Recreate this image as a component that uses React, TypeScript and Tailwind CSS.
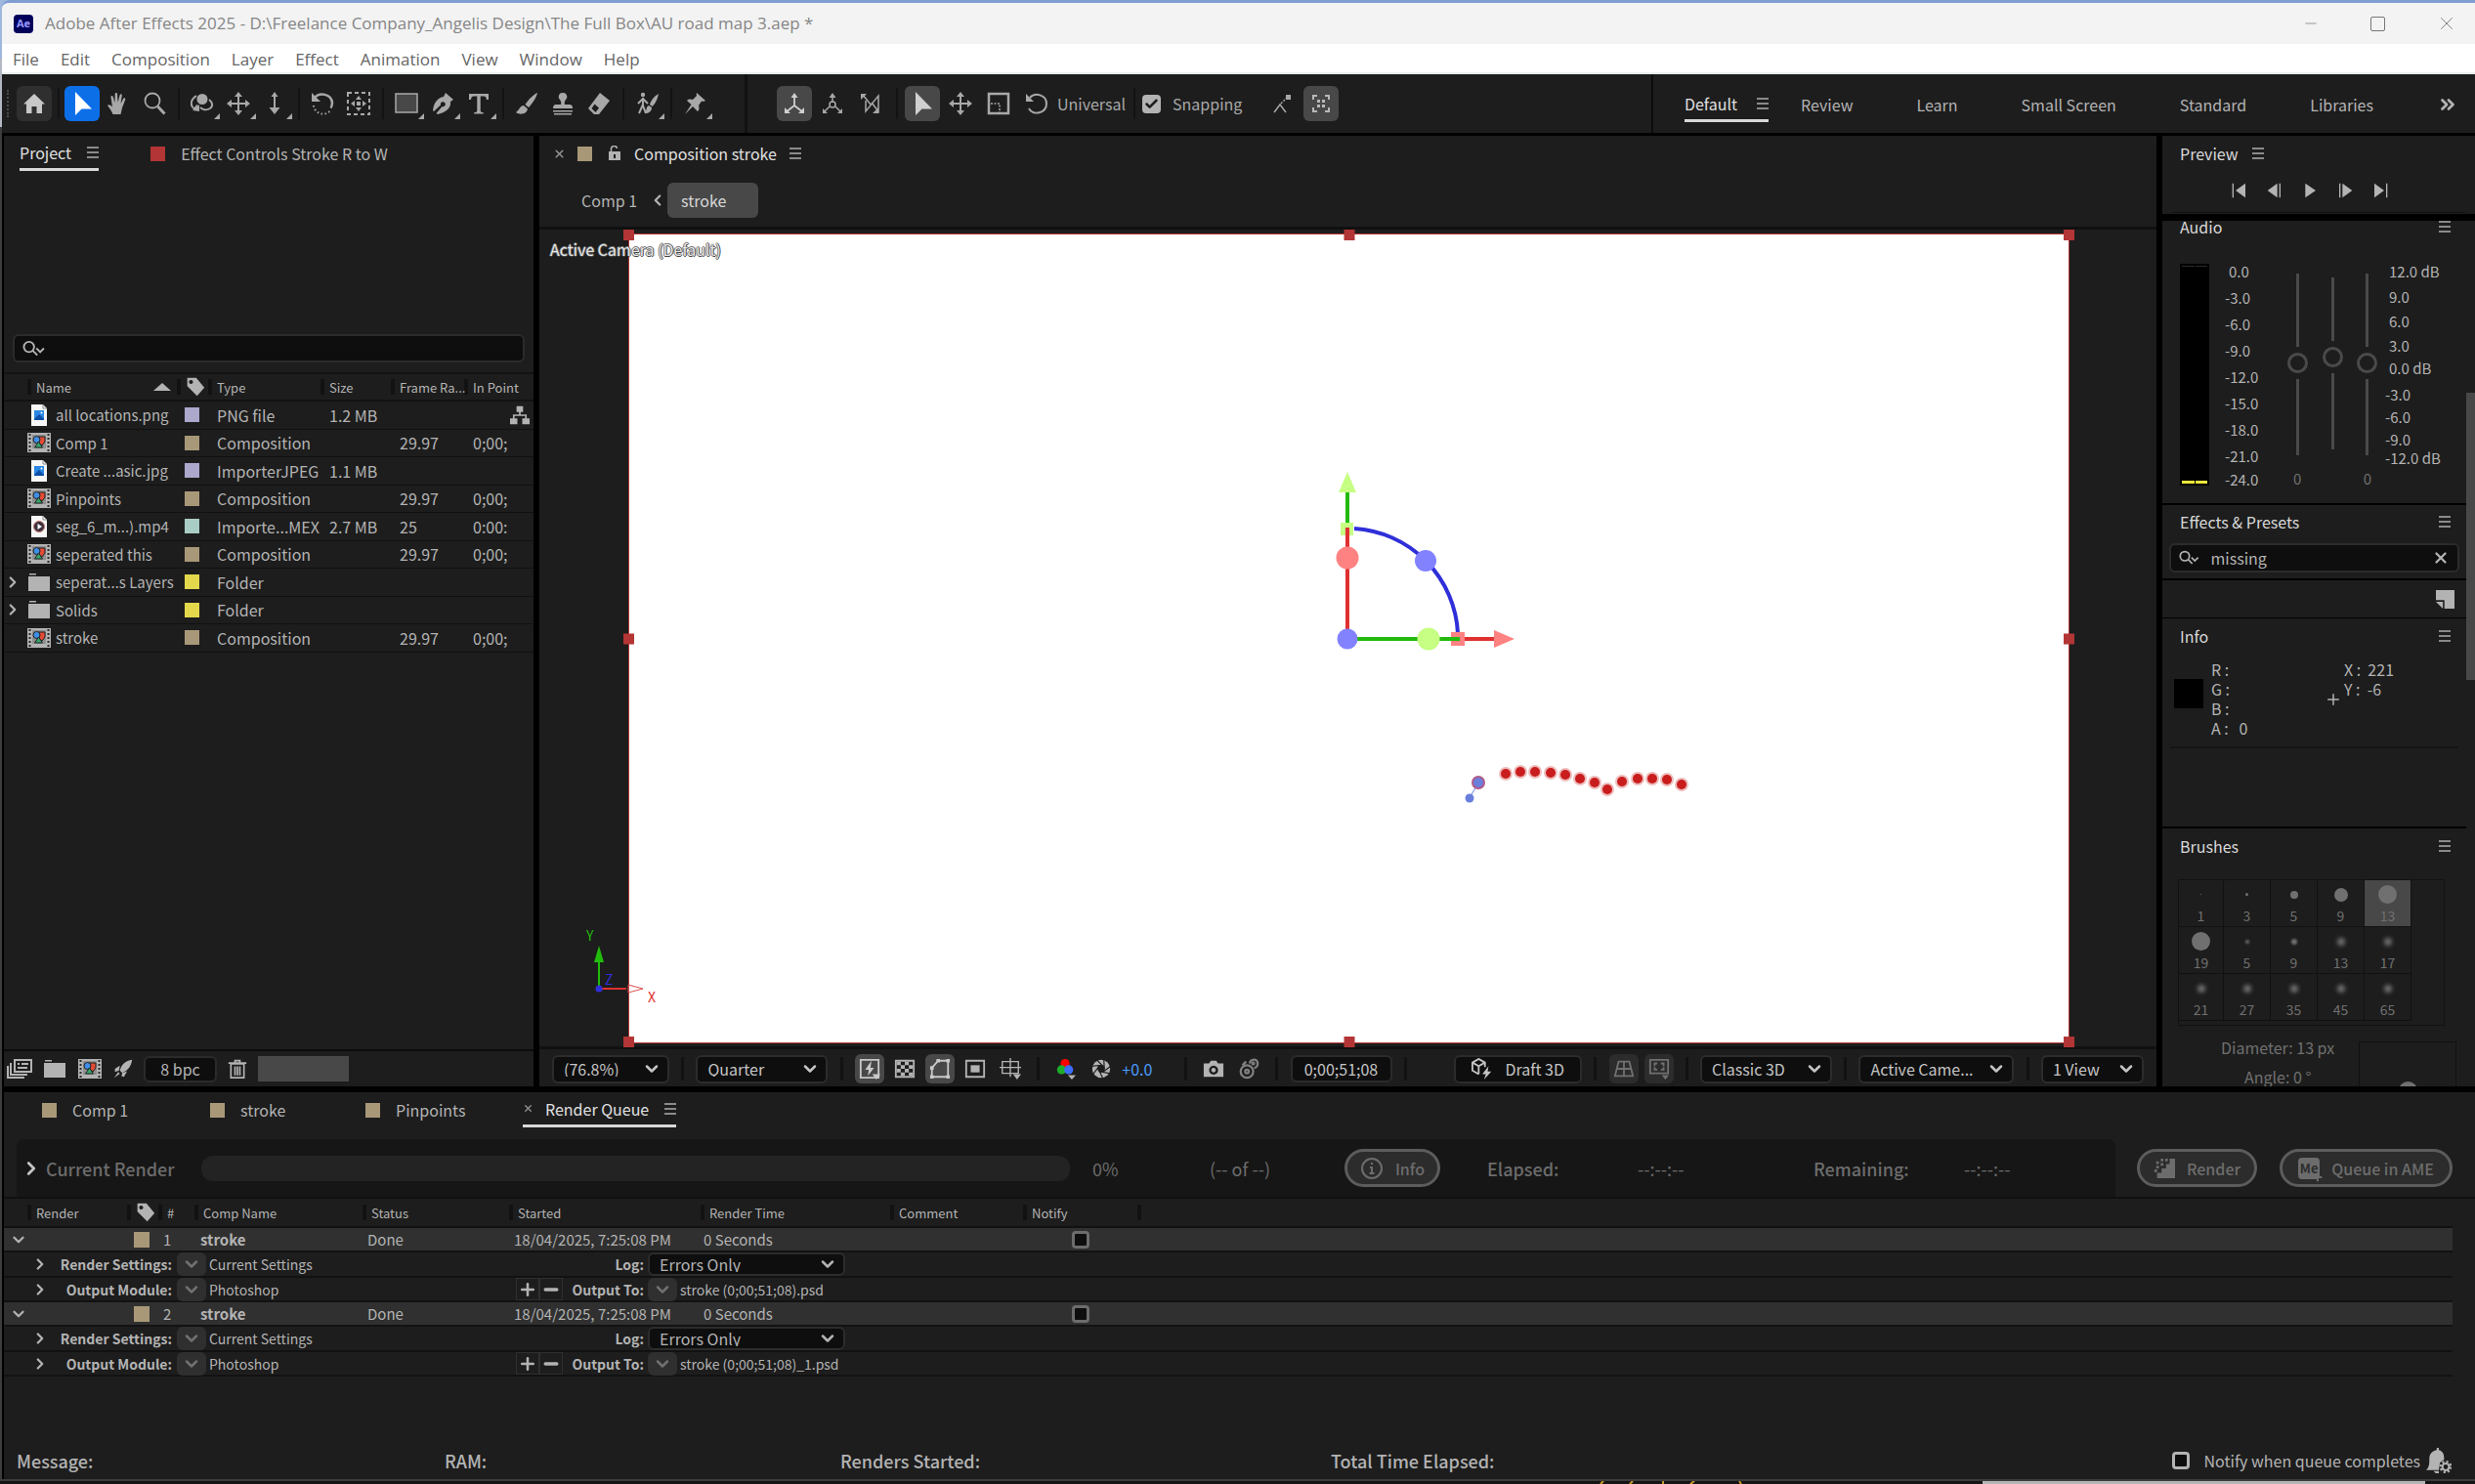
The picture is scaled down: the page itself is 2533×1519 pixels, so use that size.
import type { ReactNode } from "react";
import { Check, ChevronDown, ChevronLeft, ChevronRight, ChevronsRight, Minus, Plus, X } from "lucide-react";

type IconProps = { size?: number; children?: ReactNode };

const Svg = ({ size = 24, children }: IconProps) => (
  <svg width={size} height={size} viewBox="0 0 24 24" fill="currentColor" className="shrink-0" aria-hidden="true">
    {children}
  </svg>
);

const line = { fill: "none", stroke: "currentColor", strokeWidth: 2 };
const thin = { fill: "none", stroke: "currentColor", strokeWidth: 1.5 };

const Corner = () => <path d="M24 16v8h-8z" />;

const icons = {
  home: <path d="M12 2 23 12.5h-3V22h-5.500v-7h-5v7H4v-9.500H1z" />,
  select: <path d="M5 0v24l6.500-6.500H22z" />,
  hand: (
    <path d="M6.500 23c-1.500-3.500-3-6-5.500-9 1.500-1.500 3-.8 5 1.500L4.500 5.500c-.2-1.800 1.800-2 2.200-.4L8.500 11l.2-8.500c0-1.900 2.300-1.900 2.400 0l.5 8.300 2-7.500c.5-1.600 2.500-1.200 2.200.6l-1.300 8 2.700-5c.8-1.400 2.500-.6 2 1L16 16.500 14.500 23z" />
  ),
  zoom: (
    <>
      <circle cx="10" cy="9" r="7.500" {...thin} strokeWidth={1.8} />
      <path d="m15.500 15 7 7.500" {...line} strokeWidth={3} />
    </>
  ),
  orbit: (
    <>
      <circle cx="12" cy="7.500" r="5.500" />
      <path d="M6 4C0 8-1 14 4 17.500l3-4M19 8c4 3 4 7 1 9-4 2.500-8 1-10-1" {...line} />
      <path d="m9 13 0 7-7-1z" />
    </>
  ),
  move: (
    <>
      <path d="M12 3v18M3 12h18" {...line} />
      <path d="m12 0 4 5H8zM12 24l4-5H8zM0 12l5-4v8zM24 12l-5-4v8z" />
    </>
  ),
  dolly: (
    <>
      <path d="M12 4v14" {...line} />
      <path d="m12 0 3.500 5h-7zM12 23l5.500-7h-11z" />
    </>
  ),
  rotate: (
    <>
      <path d="M4 6c5-6 17-4 18 5 0 2-.5 4-1.500 5.500" {...line} strokeWidth={2.500} />
      <path d="M1 1v9h9z" />
      <path d="M3 14c1 9 13 12 18 4" {...line} strokeDasharray="1.500 2.500" />
    </>
  ),
  panBehind: (
    <>
      <rect x="1" y="1" width="22" height="22" {...line} strokeDasharray="4 3" />
      <path d="m12 4 3 4H9zM12 20l3-4H9zM4 12l4-3v6zM20 12l-4-3v6zM10 10h4v4h-4z" />
    </>
  ),
  rect: <rect x="1" y="2" width="22" height="19" fill="#484848" stroke="currentColor" strokeWidth="1.500" />,
  pen: (
    <path
      d="m15 1 8 7-3 2c1 6-4 11-13 13l-1.500-1 6-7a2.500 2.500 0 1 0-1.500-1.500l-7 6.500L2 19C3 11 7 6 13 5z"
      fillRule="evenodd"
    />
  ),
  type: <path d="M2 2h20v6h-2c-.3-2.500-1-3.500-3-3.500h-3.300V19c0 1.500.8 2 3 2v1.500H7.300V21c2.200 0 3-.5 3-2V4.500H7c-2 0-2.700 1-3 3.500H2z" />,
  brush: <path d="M23 1c-4 1.500-10 8-12.500 12l3.500 3C17 13 22 6 23 1zM9 14c-4 0-4 4-8 7 4 3 11 2 12-3.500z" />,
  stamp: <path d="M12 1a4 4 0 0 0-3 7c1.500 2 1.500 3.500 1 5H5c-2 0-3 1.500-3 4h20c0-2.500-1-4-3-4h-5c-.5-1.500-.5-3 1-5a4 4 0 0 0-3-7zM2 19h20v1.500H2zM3 22h18v1.500H3z" />,
  eraser: <path d="m13 1 10 8-11 14-5 0L1 17zm-8.500 16 4 4 3.500-4.500-4.500-4z" fillRule="evenodd" />,
  roto: (
    <>
      <circle cx="8" cy="3" r="2.200" />
      <path d="M8 6v8l3 8M8 13l-4 9M8 7l-5 5M8 7l5 5" {...line} />
      <path d="M24 2c-4 2-8 7-9 11l2.500 2C21 12 23 7 24 2zM14 14c-3 1-2 5-4 8 4 0 7-2 7-6z" />
    </>
  ),
  pin: <path d="m14 1 9 8c-2 1-3 1-4 .5L16 14c1 3 .5 5-1 6l-5-5-8 8 6.500-10L4 9c1-1.500 3.500-2 6-1l4-4c-.5-1-.5-2 0-3z" />,
  axes: (
    <>
      <path d="M12 4v10M12 14l-9 7M12 14l9 7" {...thin} strokeWidth={1.800} />
      <path d="m12 1 3.500 5h-7zM2 16v6h6zM22 16v6h-6z" />
    </>
  ),
  axesWorld: (
    <>
      <path d="M12 4v7M9 15l-6 6M15 15l6 6" {...thin} />
      <circle cx="12" cy="13" r="3" {...thin} />
      <path d="m12 1 3.500 5h-7zM2 17v5h5zM22 17v5h-5z" />
    </>
  ),
  axesView: (
    <>
      <path d="m4 3 8 10M7 9v11L20 4v16l-7-9" {...thin} />
      <path d="M2 2h6L2 8zM20 22v-6l-6 6z" />
    </>
  ),
  scale: (
    <>
      <path d="M2 2h20v20H2z" {...line} strokeWidth={2.500} />
      <path d="M4 12h9v9" {...thin} strokeDasharray="2 1.500" />
    </>
  ),
  undo: (
    <>
      <path d="M5 6c5-6 17-3 17 6 0 10-14 13-18 5" {...line} />
      <path d="M1 2v8h8z" />
    </>
  ),
  snapEdge: (
    <>
      <path d="m4 21 6-8 6 8" {...thin} />
      <path d="m11 12 6-6" {...thin} strokeDasharray="2 1.500" />
      <path d="M16 3h5v5h-5z" />
    </>
  ),
  snapBox: (
    <>
      <path d="M4 8V4h4M16 4h4v4M20 16v4h-4M8 20H4v-4" {...line} />
      <path d="M8 8h3v3H8zM13 8h3v3h-3zM8 13h3v3H8zM13 13h3v3h-3z" />
    </>
  ),
};

const Tag = () => (
  <Svg size={20}>
    <path d="M2 1h11l10 12-9 10L2 11zm4.500 2.500a2.500 2.500 0 1 0 .1 0z" fillRule="evenodd" />
  </Svg>
);

const PanelMenu = ({ label }: { label: string }) => (
  <button type="button" aria-label={label} className="text-[#8a8a8a]">
    <svg width="12" height="12" viewBox="0 0 12 12" fill="currentColor" aria-hidden="true">
      <path d="M0 0h12v2H0zM0 5h12v2H0zM0 10h12v2H0z" />
    </svg>
  </button>
);

const SearchIcon = () => (
  <svg width="24" height="18" viewBox="0 0 24 18" fill="none" stroke="#b3b3b3" strokeWidth="2" aria-hidden="true">
    <circle cx="7" cy="7" r="5.500" />
    <path d="m11 11 5 5M15 8.500l4 4 4-4" />
  </svg>
);

const CompIcon = () => (
  <svg width="24" height="20" viewBox="0 0 24 20" aria-hidden="true" className="shrink-0">
    <path d="M0 0h24v20H0z" fill="#b3b3b3" />
    <path d="M2.500 1v18M21.500 1v18" stroke="#2a2a2a" strokeWidth="2" strokeDasharray="2 2" />
    <path d="M5 2h14v14H5z" fill="#8f8f8f" />
    <path d="M11 4h7v5l-3 4-4-3z" fill="#e34b35" stroke="#222" />
    <circle cx="9.500" cy="7" r="3.500" fill="#3f8fe8" stroke="#222" />
    <path d="m11.500 9 4 6h-8z" fill="#35a56b" stroke="#222" />
  </svg>
);

const FileIcon = ({ video }: { video?: boolean }) => (
  <svg width="24" height="22" viewBox="0 0 24 22" aria-hidden="true" className="shrink-0">
    <path d="M4 0h12l4 4v18H4z" fill="#f7f7f7" />
    <path d="M16 0v4h4" fill="none" stroke="#8a8a8a" />
    {video ? (
      <>
        <circle cx="12" cy="11" r="5.500" fill="#3b2f3d" stroke="#c9796a" />
        <path d="m10.500 8 4.500 3-4.500 3z" fill="#fff" />
      </>
    ) : (
      <>
        <path d="M7 6h10v10H7z" fill="#2b87e3" />
        <path d="m7 15 5-5 5 5v1H7z" fill="#0b4ea8" />
        <circle cx="14.500" cy="8.500" r="1" fill="#fff" />
      </>
    )}
  </svg>
);

const FolderIcon = () => (
  <svg width="24" height="18" viewBox="0 0 24 18" fill="#b3b3b3" aria-hidden="true" className="shrink-0">
    <path d="M2 0h7v1.500H2zM1 3h22v15H1z" />
  </svg>
);

const Divider = () => <span className="h-6 w-[3px] shrink-0 bg-[#121212]" />;

const ToolButton = ({
  name,
  label,
  tone = "",
  flyout,
}: {
  name: keyof typeof icons;
  label: string;
  tone?: string;
  flyout?: boolean;
}) => (
  <button
    type="button"
    aria-label={label}
    className={`relative flex size-9 shrink-0 items-center justify-center rounded-md ${tone}`}
  >
    <Svg>{icons[name]}</Svg>
    {flyout && (
      <span className="absolute right-0 bottom-0.5">
        <Svg size={18}>
          <Corner />
        </Svg>
      </span>
    )}
  </button>
);

const ToolSeparator = () => (
  <span className="flex w-[11px] shrink-0 justify-center">
    <span className="h-8 w-0.5 bg-[#131313]" />
  </span>
);

const Dropdown = ({ label, value, className }: { label: string; value: string; className: string }) => (
  <span className={`relative shrink-0 ${className}`}>
    <select
      aria-label={label}
      className="h-full w-full appearance-none rounded-md border-2 border-[#2c2c2c] bg-[#0e0e0e] pl-2.5 text-base leading-none text-[#c4c4c4]"
    >
      <option>{value}</option>
    </select>
    <ChevronDown
      size={20}
      strokeWidth={3}
      className="pointer-events-none absolute top-1/2 right-2 -translate-y-1/2 text-[#c4c4c4]"
    />
  </span>
);

const TitleBar = () => (
  <>
    <header className="flex h-[45px] items-center rounded-tl-lg border-t-3 border-[#7f9fd3] bg-[#f3f3f3] pl-3 font-['Open_Sans',sans-serif]">
      <span className="flex h-[19px] w-5 items-center justify-center rounded-sm bg-[#00005b] text-[11px] font-bold text-[#9999ff]">
        Ae
      </span>
      <h1 className="ml-3 flex-1 text-[17px] text-[#868686]">
        Adobe After Effects 2025 - D:\Freelance Company_Angelis Design\The Full Box\AU road map 3.aep *
      </h1>
      <div className="flex items-center gap-[52px] pr-[18px] text-[#777]">
        <button type="button" aria-label="Minimize">
          <Minus size={18} strokeWidth={1} />
        </button>
        <button type="button" aria-label="Maximize">
          <span className="block size-[15px] rounded-xs border border-[#777]" />
        </button>
        <button type="button" aria-label="Close">
          <X size={22} strokeWidth={1} />
        </button>
      </div>
    </header>
    <nav className="flex h-[31px] items-center gap-[22px] border-b-2 border-[#e9eeec] bg-white pt-0.5 pl-[11px] font-['Open_Sans',sans-serif] text-[17px] text-[#666]">
      {["File", "Edit", "Composition", "Layer", "Effect", "Animation", "View", "Window", "Help"].map((item) => (
        <button key={item} type="button">
          {item}
        </button>
      ))}
    </nav>
  </>
);

const Toolbar = () => (
  <div className="flex h-[60px] items-center pl-[5px] text-[#a8a8a8]">
    <span className="mr-2 h-7 border-l-2 border-dotted border-[#4a4a4a]" />
    <div className="flex w-[745px] items-center gap-px">
      <ToolButton name="home" label="Home" tone="bg-[#2f2f2f] text-[#c8c8c8]" />
      <ToolSeparator />
      <ToolButton name="select" label="Selection Tool" tone="bg-[#0d6fe8] text-white" />
      <ToolButton name="hand" label="Hand Tool" />
      <ToolButton name="zoom" label="Zoom Tool" />
      <ToolSeparator />
      <ToolButton name="orbit" label="Orbit Tool" flyout />
      <ToolButton name="move" label="Pan Camera Tool" flyout />
      <ToolButton name="dolly" label="Dolly Tool" flyout />
      <ToolSeparator />
      <ToolButton name="rotate" label="Rotation Tool" />
      <ToolButton name="panBehind" label="Pan Behind Tool" />
      <ToolSeparator />
      <ToolButton name="rect" label="Rectangle Tool" flyout />
      <ToolButton name="pen" label="Pen Tool" flyout />
      <ToolButton name="type" label="Type Tool" flyout />
      <ToolSeparator />
      <ToolButton name="brush" label="Brush Tool" />
      <ToolButton name="stamp" label="Clone Stamp Tool" />
      <ToolButton name="eraser" label="Eraser Tool" />
      <ToolSeparator />
      <ToolButton name="roto" label="Roto Brush Tool" flyout />
      <ToolSeparator />
      <ToolButton name="pin" label="Puppet Pin Tool" flyout />
    </div>
    <span className="h-full w-[3px] bg-[#111]" />
    <div className="flex flex-1 items-center gap-[3px] pl-[30px]">
      <ToolButton name="axes" label="Local Axis Mode" tone="bg-[#484848] text-[#d0d0d0]" />
      <ToolButton name="axesWorld" label="World Axis Mode" />
      <ToolButton name="axesView" label="View Axis Mode" />
      <ToolSeparator />
      <ToolButton name="select" label="Universal" tone="bg-[#484848] text-[#d0d0d0]" />
      <ToolButton name="move" label="Position" />
      <ToolButton name="scale" label="Scale" />
      <ToolButton name="undo" label="Rotation" />
      <span className="text-base">Universal</span>
      <ToolSeparator />
      <label className="flex items-center gap-3 text-base">
        <span className="relative flex size-[19px]">
          <input type="checkbox" defaultChecked className="size-full appearance-none rounded-sm bg-[#b3b3b3]" />
          <Check size={15} strokeWidth={4} className="pointer-events-none absolute top-0.5 left-0.5 text-[#1d1d1d]" />
        </span>
        Snapping
      </label>
      <span className="ml-5 flex gap-1">
        <ToolButton name="snapEdge" label="Snap Edges" />
        <ToolButton name="snapBox" label="Snap Features" tone="bg-[#484848] text-[#b8b8b8]" />
      </span>
    </div>
    <nav className="flex h-full w-[843px] items-center gap-[65px] border-l-2 border-[#0c0c0c] pt-0.5 pl-8 text-base whitespace-nowrap text-[#b3b3b3]">
      <span className="flex h-9 items-center gap-5 border-b-3 border-[#d8d8d8] text-[#e0e0e0]">
        <button type="button">Default</button>
        <PanelMenu label="Workspace menu" />
      </span>
      {["Review", "Learn", "Small Screen", "Standard", "Libraries"].map((item) => (
        <button key={item} type="button" className="first-of-type:-ml-8">
          {item}
        </button>
      ))}
      <button type="button" aria-label="More workspaces">
        <ChevronsRight size={22} strokeWidth={3} />
      </button>
    </nav>
  </div>
);

interface ProjectItem {
  name: string;
  kind: "image" | "video" | "comp" | "folder";
  type: string;
  size?: string;
  rate?: string;
  inPoint?: string;
}

const projectItems: ProjectItem[] = [
  { name: "all locations.png", kind: "image", type: "PNG file", size: "1.2 MB" },
  { name: "Comp 1", kind: "comp", type: "Composition", rate: "29.97", inPoint: "0;00;" },
  { name: "Create ...asic.jpg", kind: "image", type: "ImporterJPEG", size: "1.1 MB" },
  { name: "Pinpoints", kind: "comp", type: "Composition", rate: "29.97", inPoint: "0;00;" },
  { name: "seg_6_m...).mp4", kind: "video", type: "Importe...MEX", size: "2.7 MB", rate: "25", inPoint: "0:00:" },
  { name: "seperated this", kind: "comp", type: "Composition", rate: "29.97", inPoint: "0;00;" },
  { name: "seperat...s Layers", kind: "folder", type: "Folder" },
  { name: "Solids", kind: "folder", type: "Folder" },
  { name: "stroke", kind: "comp", type: "Composition", rate: "29.97", inPoint: "0;00;" },
];

const swatches = {
  image: "bg-[#aba8cc]",
  video: "bg-[#a9ccc5]",
  comp: "bg-[#a89878]",
  folder: "bg-[#e3d84c]",
};

const HeadCell = ({ children }: { children?: ReactNode }) => (
  <th className="p-0 text-left text-[13px] font-normal">
    <span className="flex h-4 items-center border-l-4 border-[#121212] pl-[5px] leading-none whitespace-nowrap">{children}</span>
  </th>
);

const ProjectPanel = () => (
  <section className="flex w-[542px] shrink-0 flex-col bg-[#1d1d1d]">
    <div className="flex h-9 items-stretch pl-4 text-base leading-none">
      <span className="flex items-center gap-4 border-b-3 border-[#d8d8d8] text-[#e0e0e0]">
        <button type="button">Project</button>
        <PanelMenu label="Project panel menu" />
      </span>
      <button type="button" className="ml-[53px] flex items-center gap-4">
        <span className="size-[15px] bg-[#b43535]" />
        Effect Controls Stroke R to W
      </button>
    </div>
    <label className="mx-[9px] mt-[167px] flex h-[29px] items-center rounded-md border-2 border-[#2b2b2b] bg-[#0e0e0e] px-2">
      <SearchIcon />
      <input type="text" aria-label="Search project" className="w-full bg-transparent pl-2 text-base outline-none" />
    </label>
    <table className="mt-[10px] w-full table-fixed border-t-2 border-[#121212] leading-none">
      <colgroup>
        <col className="w-[24px]" />
        <col className="w-[153px]" />
        <col className="w-[32px]" />
        <col className="w-[115px]" />
        <col className="w-[72px]" />
        <col className="w-[75px]" />
        <col />
      </colgroup>
      <thead>
        <tr className="h-[28px] border-b-2 border-[#121212]">
          <th />
          <HeadCell>
            <span className="flex-1">Name</span>
            <svg width="18" height="8" viewBox="0 0 18 8" fill="currentColor" className="mr-1.5" aria-hidden="true">
              <path d="m9 0 9 8H0z" />
            </svg>
          </HeadCell>
          <HeadCell>
            <Tag />
          </HeadCell>
          <HeadCell>Type</HeadCell>
          <HeadCell>Size</HeadCell>
          <HeadCell>Frame Ra...</HeadCell>
          <HeadCell>In Point</HeadCell>
        </tr>
      </thead>
      <tbody className="text-base leading-none whitespace-nowrap">
        {projectItems.map((item, i) => (
          <tr key={item.name} className="border-b border-[#111] odd:h-[29px] even:h-[28px]">
            <td className="p-0">
              {item.kind === "folder" && <ChevronRight size={18} strokeWidth={3} />}
            </td>
            <td className="p-0 text-[15px]">
              <span className="flex items-center gap-[5px]">
                {item.kind === "comp" && <CompIcon />}
                {item.kind === "folder" && <FolderIcon />}
                {item.kind === "image" && <FileIcon />}
                {item.kind === "video" && <FileIcon video />}
                {item.name}
              </span>
            </td>
            <td className="p-0 pl-2">
              <span className={`block size-[15px] ${swatches[item.kind]}`} />
            </td>
            <td className="p-0 pl-[9px]">{item.type}</td>
            <td className="p-0 pl-[9px]">{item.size}</td>
            <td className="p-0 pl-[9px]">{item.rate}</td>
            <td className="p-0 pl-[9px]">
              {i === 0 ? (
                <span className="flex justify-end pr-1">
                  <Svg size={20}>
                    <path d="M8 1h8v7H8zM0 16h9v7H0zM15 16h9v7h-9zM11 8h2v3h7.500v5h-2v-3h-13v3h-2v-5H11z" />
                  </Svg>
                </span>
              ) : (
                item.inPoint
              )}
            </td>
          </tr>
        ))}
      </tbody>
    </table>
    <div className="mt-auto flex h-[38px] items-center border-t-2 border-[#0c0c0c] pl-[3px]">
      <button type="button" aria-label="Interpret Footage" className="mr-[11px]">
        <svg width="26" height="20" viewBox="0 0 26 20" fill="none" stroke="#b3b3b3" strokeWidth="2" aria-hidden="true">
          <path d="M8 1h17v12H8zM4 4v12h17M1 7v12h17M11 5h2M15 5h7M11 9h10" />
        </svg>
      </button>
      <button type="button" aria-label="New Folder" className="mr-3">
        <FolderIcon />
      </button>
      <button type="button" aria-label="New Composition" className="mr-3">
        <CompIcon />
      </button>
      <button type="button" aria-label="Project Settings" className="mr-[11px]">
        <Svg size={20}>
          <path d="M23 1C15 2 10 7 8 14l3 3C18 14 22 9 23 1zM8 8 2 12v4l5-2zM17 15l-4 7-3-1 1-4zM6 16l-5 7 7-5z" />
        </Svg>
      </button>
      <button type="button" className="h-[27px] w-[75px] rounded-md border-2 border-[#2b2b2b] bg-[#0e0e0e] text-base leading-none">
        8 bpc
      </button>
      <button type="button" aria-label="Delete" className="mx-[11px]">
        <Svg size={20}>
          <path d="M4 6h16v17H4zM1 5h22M9 5V2h6v3M9 9v11M12 9v11M15 9v11" {...line} />
        </Svg>
      </button>
      <span className="h-[26px] w-[93px] bg-[#484848]" />
    </div>
  </section>
);

const strokeDots = [
  [161, 182], [176, 180], [191, 180], [207, 181], [222, 183], [237, 187], [252, 191],
  [265, 198], [280, 190], [296, 187], [311, 187], [326, 188], [341, 193],
];

const Gizmo = () => (
  <svg width="400" height="360" viewBox="1360 470 400 360" aria-hidden="true" className="absolute top-[230px] left-[715px]">
    <path d="M1387 541a113 113 0 0 1 106 107" fill="none" stroke="#2f2fd9" strokeWidth="4" />
    <path d="M1380 504v32" stroke="#22bb0c" strokeWidth="4" />
    <path d="m1380 483 9 21h-18zM1373 535h13v13h-13z" fill="#c6ff83" />
    <path d="M1380 540v105M1500 654h32" stroke="#e03030" strokeWidth="4" />
    <path d="m1551 654-21-9v18zM1486 647h14v14h-14z" fill="#ff8282" />
    <path d="M1390 654h105" stroke="#22bb0c" strokeWidth="4" />
    <circle cx="1380" cy="571" r="11.500" fill="#ff8282" />
    <circle cx="1460" cy="574" r="11" fill="#8282ff" />
    <circle cx="1463" cy="654" r="11.500" fill="#c6ff83" />
    <circle cx="1380" cy="654" r="10.500" fill="#8282ff" />
    <path d="m1514 801-9 16" stroke="#6a7fdc" />
    <circle cx="1514" cy="801" r="6" fill="#6a7fdc" stroke="#b05a8a" strokeWidth="2" />
    <circle cx="1505" cy="817" r="4.500" fill="#6a7fdc" />
  </svg>
);

const StrokePath = () => (
  <svg width="220" height="40" viewBox="150 170 220 40" aria-hidden="true" className="absolute top-[540px] left-[886px]">
    {strokeDots.map(([x, y]) => (
      <g key={x}>
        <circle cx={x} cy={y} r="7" fill="#eebcbc" />
        <circle cx={x} cy={y} r="5" fill="#c91d1d" />
      </g>
    ))}
  </svg>
);

const handleSpots = [
  "-top-[5px] -left-[6px]",
  "-top-[5px] left-1/2 -translate-x-1/2",
  "-top-[5px] -right-[6px]",
  "top-1/2 -left-[6px] -translate-y-1/2",
  "top-1/2 -right-[6px] -translate-y-1/2",
  "-bottom-[5px] -left-[6px]",
  "-bottom-[5px] left-1/2 -translate-x-1/2",
  "-bottom-[5px] -right-[6px]",
];

const Viewport = () => (
  <div className="relative flex flex-1 border-y-3 border-[#101010] pt-1 pr-[89px] pb-[3px] pl-[91px]">
    <div className="relative flex-1 border border-[#b43535] bg-white">
      {handleSpots.map((spot) => (
        <span key={spot} className={`absolute size-[11px] bg-[#b43535] ${spot}`} />
      ))}
      <Gizmo />
      <StrokePath />
    </div>
    <span className="absolute top-2 left-[11px] text-base text-[#e8e8e8] [text-shadow:1px_0_#444,-1px_0_#777,0_1px_#444,0_-1px_#777]">
      Active Camera (Default)
    </span>
    <svg width="90" height="90" viewBox="0 0 90 90" aria-hidden="true" className="absolute bottom-9 left-10 text-[14px]">
      <path d="M21 67V38" stroke="#22bb0c" strokeWidth="2" />
      <path d="m21 23 5 17H16z" fill="#22bb0c" />
      <path d="M21 67h28" stroke="#e03030" strokeWidth="2" />
      <path d="m66 67-15-4v8z" fill="none" stroke="#e05050" />
      <circle cx="21" cy="67" r="3.500" fill="#2f2fd9" />
      <text x="8" y="18" fill="#22bb0c">Y</text>
      <text x="27" y="63" fill="#2f2fd9">Z</text>
      <text x="71" y="81" fill="#e03030">X</text>
    </svg>
  </div>
);

const ViewIcon = ({ label, active, dim, children }: { label: string; active?: boolean; dim?: boolean; children: ReactNode }) => (
  <button
    type="button"
    aria-label={label}
    className={`flex h-[30px] w-[30px] shrink-0 items-center justify-center rounded-md ${
      active ? "bg-[#484848] text-[#c8c8c8]" : dim ? "bg-[#2c2c2c] text-[#707070]" : ""
    }`}
  >
    <Svg size={22}>{children}</Svg>
  </button>
);

const ViewerBar = () => (
  <div className="flex h-[38px] items-center justify-between px-[13px] pt-0.5 text-[#b3b3b3]">
    <Dropdown label="Magnification" value="(76.8%)" className="h-[29px] w-[120px]" />
    <Divider />
    <Dropdown label="Resolution" value="Quarter" className="h-[29px] w-[135px]" />
    <Divider />
    <span className="flex gap-1.5">
      <ViewIcon label="Fast Previews" active>
        <path d="M2 2h20v20H2z" {...line} />
        <path d="m14 3-7 10h4l-1 7 7-9h-4zM15 18h9l-4.500 6z" />
      </ViewIcon>
      <ViewIcon label="Transparency Grid">
        <path d="M2 3h20v18H2z" {...line} />
        <path d="M3 4h4.500v4H3zM12 4h4.500v4H12zM7.500 8H12v4H7.500zM16.500 8H21v4h-4.500zM3 12h4.500v4H3zM12 12h4.500v4H12zM7.500 16H12v4H7.500zM16.500 16H21v4h-4.500z" />
      </ViewIcon>
      <ViewIcon label="Mask Visibility" active>
        <path d="M3 21V11l7-8h11v18z" {...line} />
        <path d="M1 19h4v4H1zM19 19h4v4h-4zM19 1h4v4h-4zM8 1h4v4H8zM1 9h4v4H1z" />
      </ViewIcon>
      <ViewIcon label="Region of Interest">
        <path d="M2 3h20v18H2z" {...line} />
        <path d="M7 8h10v8H7z" />
      </ViewIcon>
      <ViewIcon label="Grid and Guides">
        <path d="M3 4h18v13H3zM12 0v21M0 10.500h24" {...thin} />
        <path d="M15 18h9l-4.500 6z" />
      </ViewIcon>
    </span>
    <Divider />
    <span className="flex items-center gap-1.5">
      <ViewIcon label="Channels">
        <circle cx="11" cy="6" r="5" fill="#f00" />
        <circle cx="7" cy="13" r="5" fill="#1fae2b" />
        <circle cx="15" cy="13" r="5" fill="#3d6dff" />
        <path d="M14 19h9l-4.500 5z" />
      </ViewIcon>
      <ViewIcon label="Exposure">
        <circle cx="12" cy="12" r="10" />
        <path
          d="M14 9 7 2M15.500 12.500 15 2M14 15.500l8-6M9.500 15 21 17M8.500 11.500 14 23M10 8.500 3 18M12 8 2 9"
          fill="none"
          stroke="#1d1d1d"
          strokeWidth="1.300"
        />
        <circle cx="12" cy="12" r="4" fill="#1d1d1d" />
      </ViewIcon>
      <span className="text-base text-[#4a9cff]">+0.0</span>
    </span>
    <span className="w-2" />
    <Divider />
    <span className="flex gap-1.5">
      <ViewIcon label="Take Snapshot">
        <path d="M1 6h6l2-3h6l2 3h6v15H1zm11 2.500a5 5 0 1 0 .1 0zm0 2.500a2.500 2.500 0 1 1-.1 0z" fillRule="evenodd" />
      </ViewIcon>
      <ViewIcon label="Show Snapshot">
        <g stroke="#808080" strokeWidth="2.500" fill="none">
          <circle cx="10" cy="15" r="7" />
          <circle cx="10" cy="15" r="2" />
          <path d="M13 6c1-5 9-6 9 0 0 3-2 5-4 5M5 8l4-4" />
          <circle cx="17" cy="6" r="1" />
        </g>
      </ViewIcon>
    </span>
    <Divider />
    <button type="button" className="h-7 w-[104px] rounded-md border-2 border-[#2b2b2b] bg-[#0e0e0e] text-base leading-none text-[#c4c4c4]">
      0;00;51;08
    </button>
    <Divider />
    <span className="w-6" />
    <button
      type="button"
      className="flex h-[29px] w-[131px] items-center justify-center gap-3 rounded-md border-2 border-[#2b2b2b] bg-[#0e0e0e] text-base leading-none text-[#c4c4c4]"
    >
      <Svg size={22}>
        <path d="M15 10V5L8 1 1 5v9l7 4M1 5l7 4 7-4M8 9v9" {...line} />
        <path d="m19 9-7 9h4l-2 6 8-9h-4z" />
      </Svg>
      Draft 3D
    </button>
    <Divider />
    <span className="flex gap-1.5">
      <ViewIcon label="3D Ground Plane" dim>
        <path d="M6 4h12l4 16H2zM12 4v16M4 12h16" {...line} />
      </ViewIcon>
      <ViewIcon label="Extended Viewer" dim>
        <path d="M2 2h20v15H2z" {...line} />
        <path d="M7 9V6h3M14 6h3v3M17 10v3h-3M10 13H7v-3" {...line} />
        <path d="M15 19h8l-4 5z" />
      </ViewIcon>
    </span>
    <Divider />
    <Dropdown label="3D Renderer" value="Classic 3D" className="h-[29px] w-[135px]" />
    <Divider />
    <Dropdown label="3D View" value="Active Came..." className="h-[29px] w-[159px]" />
    <Divider />
    <Dropdown label="View Layout" value="1 View" className="h-[29px] w-[105px]" />
  </div>
);

const CompPanel = () => (
  <section className="flex min-w-0 flex-1 flex-col bg-[#1d1d1d]">
    <div className="flex h-9 items-center pl-3.5 text-base leading-none text-[#e0e0e0]">
      <button type="button" aria-label="Close composition" className="mr-3 text-[#909090]">
        <X size={13} strokeWidth={3} />
      </button>
      <span className="mr-4 size-[15px] bg-[#a89878]" />
      <svg width="14" height="16" viewBox="0 0 14 16" aria-hidden="true" className="mr-[13px] text-[#b3b3b3]">
        <path d="M3.500 7V4a3 3 0 0 1 6-1" fill="none" stroke="currentColor" strokeWidth="1.500" />
        <path d="M1 6h12v9H1zM6 9v4h2V9z" fill="currentColor" fillRule="evenodd" />
      </svg>
      <h2 className="mr-[13px]">Composition stroke</h2>
      <PanelMenu label="Composition panel menu" />
    </div>
    <nav className="flex h-[57px] items-center pt-0.5 pl-[43px] text-base leading-none">
      <button type="button">Comp 1</button>
      <ChevronLeft size={18} strokeWidth={3} className="mr-px ml-3" />
      <button type="button" className="h-9 w-[93px] rounded-md bg-[#484848] pl-3.5 text-left text-[#d8d8d8]">
        stroke
      </button>
    </nav>
    <Viewport />
    <ViewerBar />
  </section>
);

const PanelHead = ({ title }: { title: string }) => (
  <div className="flex items-center justify-between pr-4 pl-[18px] text-base leading-3 text-[#d8d8d8]">
    <h2>{title}</h2>
    <PanelMenu label={`${title} panel menu`} />
  </div>
);

const meterLabels = ["0.0", "-3.0", "-6.0", "-9.0", "-12.0", "-15.0", "-18.0", "-21.0", "-24.0"];

const gainLabels = [
  { text: "12.0 dB", gap: "" },
  { text: "9.0", gap: "mt-[7px]" },
  { text: "6.0", gap: "mt-1.5" },
  { text: "3.0", gap: "mt-1.5" },
  { text: "0.0 dB", gap: "mt-1" },
  { text: "-3.0", gap: "mt-2" },
  { text: "-6.0", gap: "mt-1" },
  { text: "-9.0", gap: "mt-1" },
  { text: "-12.0 dB", gap: "" },
];

const Fader = ({ label, height, value }: { label: string; height: string; value: number }) => (
  <input
    type="range"
    aria-label={label}
    defaultValue={value}
    className={`w-[21px] appearance-none bg-[linear-gradient(#4a4a4a,#4a4a4a)] bg-[length:3px_100%] bg-center bg-no-repeat [writing-mode:vertical-lr] [&::-webkit-slider-thumb]:size-[21px] [&::-webkit-slider-thumb]:appearance-none [&::-webkit-slider-thumb]:rounded-full [&::-webkit-slider-thumb]:border-3 [&::-webkit-slider-thumb]:border-[#4a4a4a] [&::-webkit-slider-thumb]:bg-[#1d1d1d] [&::-webkit-slider-thumb]:shadow-[0_0_0_6px_#1d1d1d] ${height}`}
  />
);

const MeterBar = () => (
  <span className="flex-1 border-b-3 border-[#ece63a] bg-[linear-gradient(#2b2b2b,#2b2b2b)] bg-[length:100%_1px] bg-[0_12px] bg-no-repeat" />
);

const AudioPanel = () => (
  <div className="h-[289px]">
    <PanelHead title="Audio" />
    <div className="mt-8 flex items-start pl-[18px] text-[15px] leading-none">
      <div className="flex h-[227px] w-[30px] gap-px bg-black p-0.5">
        <MeterBar />
        <MeterBar />
      </div>
      <ul className="-mt-1.5 w-[80px] pl-4">
        {meterLabels.map((label, i) => (
          <li key={label} className={`flex items-center last:h-5 not-last:h-[27px] ${i === 0 ? "pl-1" : ""}`}>
            {label}
          </li>
        ))}
      </ul>
      <div className="mt-2.5 w-[92px]">
        <div className="flex h-[190px] justify-between">
          <Fader label="Left level" height="h-[186px]" value={49} />
          <Fader label="Both levels" height="mt-1 h-[176px]" value={46} />
          <Fader label="Right level" height="h-[186px]" value={49} />
        </div>
        <div className="flex justify-between px-1.5 pt-3 text-[#707070]">
          <span>0</span>
          <span>0</span>
        </div>
      </div>
      <ul className="-mt-0.5 w-[80px] pl-3 leading-[19px]">
        {gainLabels.map(({ text, gap }) => (
          <li key={text} className={`${gap} ${text.startsWith("-") ? "-ml-1" : ""}`}>
            {text}
          </li>
        ))}
      </ul>
    </div>
  </div>
);

const brushRows = [
  [
    { size: 1, dot: "size-px" },
    { size: 3, dot: "size-[3px]" },
    { size: 5, dot: "size-2" },
    { size: 9, dot: "size-3.5" },
    { size: 13, dot: "size-[19px]" },
  ],
  [
    { size: 19, dot: "size-[19px]" },
    { size: 5, dot: "size-1 blur-[1px]" },
    { size: 9, dot: "size-1.5 blur-[1px]" },
    { size: 13, dot: "size-2 blur-[2px]" },
    { size: 17, dot: "size-2 blur-[2px]" },
  ],
  [
    { size: 21, dot: "size-2 blur-[2px]" },
    { size: 27, dot: "size-2 blur-[2px]" },
    { size: 35, dot: "size-2 blur-[2px]" },
    { size: 45, dot: "size-2 blur-[2px]" },
    { size: 65, dot: "size-2 blur-[2px]" },
  ],
];

const BrushesPanel = () => (
  <div className="border-t-2 border-black pt-3 text-[#707070]">
    <PanelHead title="Brushes" />
    <div className="mt-7 ml-4 h-[150px] w-[273px] border border-[#111] text-[14px] leading-none">
      {brushRows.map((row, r) => (
        <div key={r} className="flex">
          {row.map(({ size, dot }, c) => (
            <button
              key={size}
              type="button"
              className={`flex h-12 flex-col items-center border-r border-b border-[#111] pb-1 ${
                c === 0 ? "w-[46px]" : "w-12"
              } ${r === 0 && size === 13 ? "bg-[#484848]" : ""}`}
            >
              <span className="flex h-[29px] items-center">
                <span className={`rounded-full bg-[#707070] ${dot}`} />
              </span>
              {size}
            </button>
          ))}
        </div>
      ))}
    </div>
    <div className="flex pt-3.5 pl-[60px] text-base leading-none">
      <div className="w-[141px]">
        <p>Diameter: 13 px</p>
        <p className="pt-3.5 pl-6">Angle: 0 °</p>
      </div>
      <div className="mt-0.5 flex h-[60px] w-[100px] justify-center border border-[#111] pt-10">
        <span className="size-[19px] rounded-full bg-[#707070]" />
      </div>
    </div>
  </div>
);

const transport = [
  { label: "First Frame", d: "M1 1h2v22H1zM21 1v22L6 12z" },
  { label: "Previous Frame", d: "M16 1v22L1 12zM19 1h2v22h-2z" },
  { label: "Play", d: "M5 1v22l16-11z" },
  { label: "Next Frame", d: "M3 1h2v22H3zM8 1v22l15-11z" },
  { label: "Last Frame", d: "M3 1v22l15-11zM21 1h2v22h-2z" },
];

const SidePanels = () => (
  <aside className="flex w-[320px] shrink-0 flex-col">
    <section className="h-20 bg-[#1d1d1d]">
      <div className="flex h-9 items-center gap-3.5 pl-[18px] text-base leading-none text-[#d8d8d8]">
        <h2>Preview</h2>
        <PanelMenu label="Preview panel menu" />
      </div>
      <div className="mx-2.5 flex h-[43px] justify-start gap-5 border-b border-[#111] pt-3 pl-[61px]">
        {transport.map(({ label, d }) => (
          <button key={label} type="button" aria-label={label} className="h-4">
            <Svg size={16}>
              <path d={d} />
            </Svg>
          </button>
        ))}
      </div>
    </section>
    <div className="mt-[7px] flex min-h-0 flex-1 overflow-hidden bg-[#1d1d1d]">
      <div className="min-w-0 flex-1">
        <AudioPanel />
        <div className="border-t-2 border-black pt-[11px]">
          <PanelHead title="Effects & Presets" />
          <label className="mx-[7px] mt-4 flex h-[30px] items-center rounded-md border-2 border-[#2b2b2b] bg-[#0e0e0e] px-2">
            <SearchIcon />
            <input
              type="text"
              aria-label="Search effects"
              defaultValue="missing"
              className="w-full min-w-0 bg-transparent pl-3 text-base leading-none outline-none"
            />
            <X size={18} strokeWidth={3} className="shrink-0" />
          </label>
          <div className="mt-1.5 flex h-[41px] items-center justify-end border-t-2 border-b border-black pr-3">
            <button type="button" aria-label="New preset">
              <Svg size={19}>
                <path d="M0 0h24v24H11V13H0zM0 15h9v9z" />
              </Svg>
            </button>
          </div>
        </div>
        <div className="h-[213px] pt-3">
          <PanelHead title="Info" />
          <div className="mx-2 mt-[18px] flex h-[91px] border-b-2 border-[#151515] text-base leading-5">
            <span className="mt-5 mr-2 ml-1 size-[30px] shrink-0 bg-black" />
            <div className="w-[116px]">
              <p>R :</p>
              <p>G :</p>
              <p>B :</p>
              <p>A :&nbsp;&nbsp;&nbsp;0</p>
            </div>
            <Plus size={18} strokeWidth={2} className="mt-8 mr-0.5" />
            <div>
              <p>X :&nbsp; 221</p>
              <p>Y :&nbsp; -6</p>
            </div>
          </div>
        </div>
        <BrushesPanel />
      </div>
      <span className="mt-[176px] h-[294px] w-[9px] bg-[#484848]" />
    </div>
  </aside>
);

const SmallMenu = ({ label }: { label: string }) => (
  <button type="button" aria-label={label} className="flex h-6 w-[30px] shrink-0 items-center justify-center rounded-md bg-[#2f2f2f] text-[#707070]">
    <ChevronDown size={20} strokeWidth={3} />
  </button>
);

const pill = "flex h-[39px] shrink-0 items-center justify-center gap-3 rounded-[20px] border-3 border-[#5c5c5c] bg-[#2c2c2c] text-base leading-none font-medium";

const CurrentRender = () => (
  <div className="flex h-[61px] items-center border-b-2 border-[#101010] pr-[23px] pl-[13px] text-[18px] leading-none text-[#6c6c6c]">
    <div className="flex h-full flex-1 items-center rounded-t-lg bg-[#161616]">
      <button type="button" className="flex w-[189px] items-center gap-1 pl-1 font-medium">
        <ChevronRight size={22} strokeWidth={3} className="text-[#c4c4c4]" />
        Current Render
      </button>
      <span role="progressbar" aria-valuenow={0} className="h-[26px] flex-1 rounded-xl bg-[#232323]" />
      <span className="w-[143px] pl-[23px]">0%</span>
      <span className="w-[138px]">(-- of --)</span>
      <button type="button" className={`w-[98px] ${pill}`}>
        <svg width="24" height="24" viewBox="0 0 24 24" fill="none" stroke="currentColor" strokeWidth="2" aria-hidden="true">
          <circle cx="12" cy="12" r="10" />
          <path d="M12 6v2M10 11h2v6M9.500 17h5" />
        </svg>
        Info
      </button>
      <span className="w-[202px] pl-[48px] font-medium">Elapsed:</span>
      <span className="w-[180px]">--:--:--</span>
      <span className="w-[154px] font-medium">Remaining:</span>
      <span className="w-[155px]">--:--:--</span>
    </div>
    <button type="button" className={`ml-[22px] w-[123px] ${pill}`}>
      <Svg size={22}>
        <path d="M24 1v22H4v-6h5v-5h5V7h4V1zM3 4h3v3H3zM8 1h3v3H8zM13 1h3v3h-3zM8 6h3v3H8zM3 9h3v3H3zM1 13h3v3H1z" />
      </Svg>
      Render
    </button>
    <button type="button" className={`ml-[23px] w-[177px] ${pill}`}>
      <span className="relative flex size-[22px] items-center justify-center rounded-sm bg-[#6c6c6c] text-[13px] font-bold text-[#2c2c2c]">
        Me
        <Plus size={12} strokeWidth={4} className="absolute -right-1 -bottom-1 text-[#6c6c6c]" />
      </span>
      Queue in AME
    </button>
  </div>
);

const queue = [
  { id: 1, output: "stroke (0;00;51;08).psd" },
  { id: 2, output: "stroke (0;00;51;08)_1.psd" },
];

const QueueItem = ({ id, output }: { id: number; output: string }) => (
  <>
    <tr className="h-[25px] border-b-2 border-[#121212] bg-[#303030]">
      <td className="p-0 pl-1.5">
        <ChevronDown size={18} strokeWidth={3} />
      </td>
      <td />
      <td className="p-0 pl-[7px]">
        <span className="block size-4 bg-[#a89878]" />
      </td>
      <td className="p-0 pl-[5px]">{id}</td>
      <td className="p-0 pl-1.5 font-bold">stroke</td>
      <td className="p-0 pl-[5px]">Done</td>
      <td className="p-0 pl-[5px]">18/04/2025, 7:25:08 PM</td>
      <td className="p-0 pl-[3px]">0 Seconds</td>
      <td />
      <td className="p-0 pl-[50px]">
        <input
          type="checkbox"
          aria-label={`Notify for item ${id}`}
          className="block size-[18px] appearance-none rounded-sm border-3 border-[#6c6c6c] bg-[#0e0e0e]"
        />
      </td>
      <td />
    </tr>
    <tr className="h-[26px] border-b-2 border-[#121212] text-[14px]">
      <td colSpan={11} className="p-0">
        <div className="flex h-6 items-center">
          <ChevronRight size={18} strokeWidth={3} className="ml-7" />
          <span className="w-[126px] text-right font-bold">Render Settings:</span>
          <span className="ml-[5px]">
            <SmallMenu label="Render settings templates" />
          </span>
          <span className="w-[400px] pl-[3px]">Current Settings</span>
          <label className="w-[48px] text-right font-bold" htmlFor={`log-${id}`}>
            Log:
          </label>
          <span className="relative ml-1 h-6 w-[202px]">
            <select
              id={`log-${id}`}
              className="h-full w-full appearance-none rounded-md border-2 border-[#2c2c2c] bg-[#0e0e0e] pl-2.5 text-base leading-none"
            >
              <option>Errors Only</option>
            </select>
            <ChevronDown size={20} strokeWidth={3} className="pointer-events-none absolute top-0.5 right-2" />
          </span>
        </div>
      </td>
    </tr>
    <tr className="h-[25px] border-b-2 border-[#121212] text-[14px]">
      <td colSpan={11} className="p-0">
        <div className="flex h-[23px] items-center">
          <ChevronRight size={18} strokeWidth={3} className="ml-7" />
          <span className="w-[126px] text-right font-bold">Output Module:</span>
          <span className="ml-[5px]">
            <SmallMenu label="Output module templates" />
          </span>
          <span className="w-[317px] pl-[3px]">Photoshop</span>
          <button type="button" aria-label="Add output module" className="flex h-[23px] w-6 items-center justify-center border border-[#2f2f2f]">
            <Plus size={20} strokeWidth={3} />
          </button>
          <button type="button" aria-label="Remove output module" className="flex h-[23px] w-6 items-center justify-center border border-[#2f2f2f]">
            <Minus size={20} strokeWidth={4} />
          </button>
          <span className="w-[83px] text-right font-bold">Output To:</span>
          <span className="ml-1">
            <SmallMenu label="Output destination" />
          </span>
          <span className="pl-[3px]">{output}</span>
        </div>
      </td>
    </tr>
  </>
);

const tabs = ["Comp 1", "stroke", "Pinpoints"];
const tabWidths = ["w-[172px]", "w-[159px]", "w-[161px]"];

const RenderQueue = () => (
  <section className="flex h-[396px] flex-col bg-[#1d1d1d]">
    <div className="flex h-9 items-stretch pl-[39px] text-base leading-none">
      {tabs.map((tab, i) => (
        <button key={tab} type="button" className={`flex items-center gap-4 ${tabWidths[i]}`}>
          <span className="size-[15px] bg-[#a89878]" />
          {tab}
        </button>
      ))}
      <span className="flex items-center border-b-3 border-[#d8d8d8] text-[#e0e0e0]">
        <button type="button" aria-label="Close Render Queue" className="mr-3 text-[#909090]">
          <X size={11} strokeWidth={3} />
        </button>
        <h2 className="mr-4">Render Queue</h2>
        <PanelMenu label="Render Queue panel menu" />
      </span>
    </div>
    <div className="mt-3">
      <CurrentRender />
    </div>
    <div className="pr-[23px]">
      <table className="w-full table-fixed text-[15px] leading-none whitespace-nowrap">
        <colgroup>
          <col className="w-[24px]" />
          <col className="w-[102px]" />
          <col className="w-[32px]" />
          <col className="w-[37px]" />
          <col className="w-[172px]" />
          <col className="w-[150px]" />
          <col className="w-[196px]" />
          <col className="w-[194px]" />
          <col className="w-[136px]" />
          <col className="w-[117px]" />
          <col />
        </colgroup>
        <thead>
          <tr className="h-[29px] border-b-2 border-[#121212]">
            <th />
            <HeadCell>Render</HeadCell>
            <HeadCell>
              <Tag />
            </HeadCell>
            <HeadCell>#</HeadCell>
            <HeadCell>Comp Name</HeadCell>
            <HeadCell>Status</HeadCell>
            <HeadCell>Started</HeadCell>
            <HeadCell>Render Time</HeadCell>
            <HeadCell>Comment</HeadCell>
            <HeadCell>Notify</HeadCell>
            <HeadCell />
          </tr>
        </thead>
        <tbody>
          {queue.map((item) => (
            <QueueItem key={item.id} {...item} />
          ))}
        </tbody>
      </table>
    </div>
    <footer className="mt-auto flex h-[38px] items-center pr-6 pl-[13px] text-[18px] leading-none font-medium">
      <span className="w-[438px]">Message:</span>
      <span className="w-[405px]">RAM:</span>
      <span className="w-[502px]">Renders Started:</span>
      <span className="flex-1">Total Time Elapsed:</span>
      <label className="flex items-center gap-3.5 text-base font-normal">
        <input type="checkbox" className="size-[18px] appearance-none rounded-sm border-3 border-[#b3b3b3] bg-[#0e0e0e]" />
        Notify when queue completes
      </label>
      <button type="button" aria-label="Notification settings" className="ml-1.5">
        <Svg size={26}>
          <path d="M10 0h2v2c4 1 5 4 5 9l-4 3-1 7H0c3-3 3-6 3-10 0-5 2-8 7-9zM7 22h5v2H9z" />
          <circle cx="18.500" cy="18" r="3.200" {...line} />
          <circle cx="18.500" cy="18" r="5" {...line} strokeDasharray="2 1.900" />
        </Svg>
      </button>
    </footer>
  </section>
);

const App = () => (
  <div className="flex h-screen flex-col overflow-hidden bg-black font-['Noto_Sans_CJK_SC',sans-serif] text-[#b3b3b3]">
    <div className="flex min-h-0 flex-1 flex-col bg-[linear-gradient(#9fb6dd_60px,#b4b8c2_60px,#b4b8c2_130px,#3c3c3c_130px)] pl-0.5">
      <TitleBar />
      <div className="bg-[#1d1d1d]">
        <Toolbar />
      </div>
      <main className="flex min-h-0 flex-1 flex-col bg-black pt-[3px] pl-0.5">
        <div className="flex min-h-0 flex-1 gap-1.5">
          <ProjectPanel />
          <CompPanel />
          <SidePanels />
        </div>
        <div className="mt-1.5">
          <RenderQueue />
        </div>
      </main>
    </div>
    <div className="flex h-[5px] justify-end border-t-2 border-[#3c3c3c] bg-[#141414]">
      <svg width="200" height="3" viewBox="0 0 200 3" fill="none" stroke="#c9982a" strokeWidth="2" className="mr-[199px]" aria-hidden="true">
        <path d="m8 3 3-3M38 3l3-3M72 0v3M100 3l4-3M150 0l2 3" />
      </svg>
      <span className="h-full w-[453px] bg-[#b5b5b5]" />
      <span className="w-[51px]" />
    </div>
  </div>
);

export default App;
